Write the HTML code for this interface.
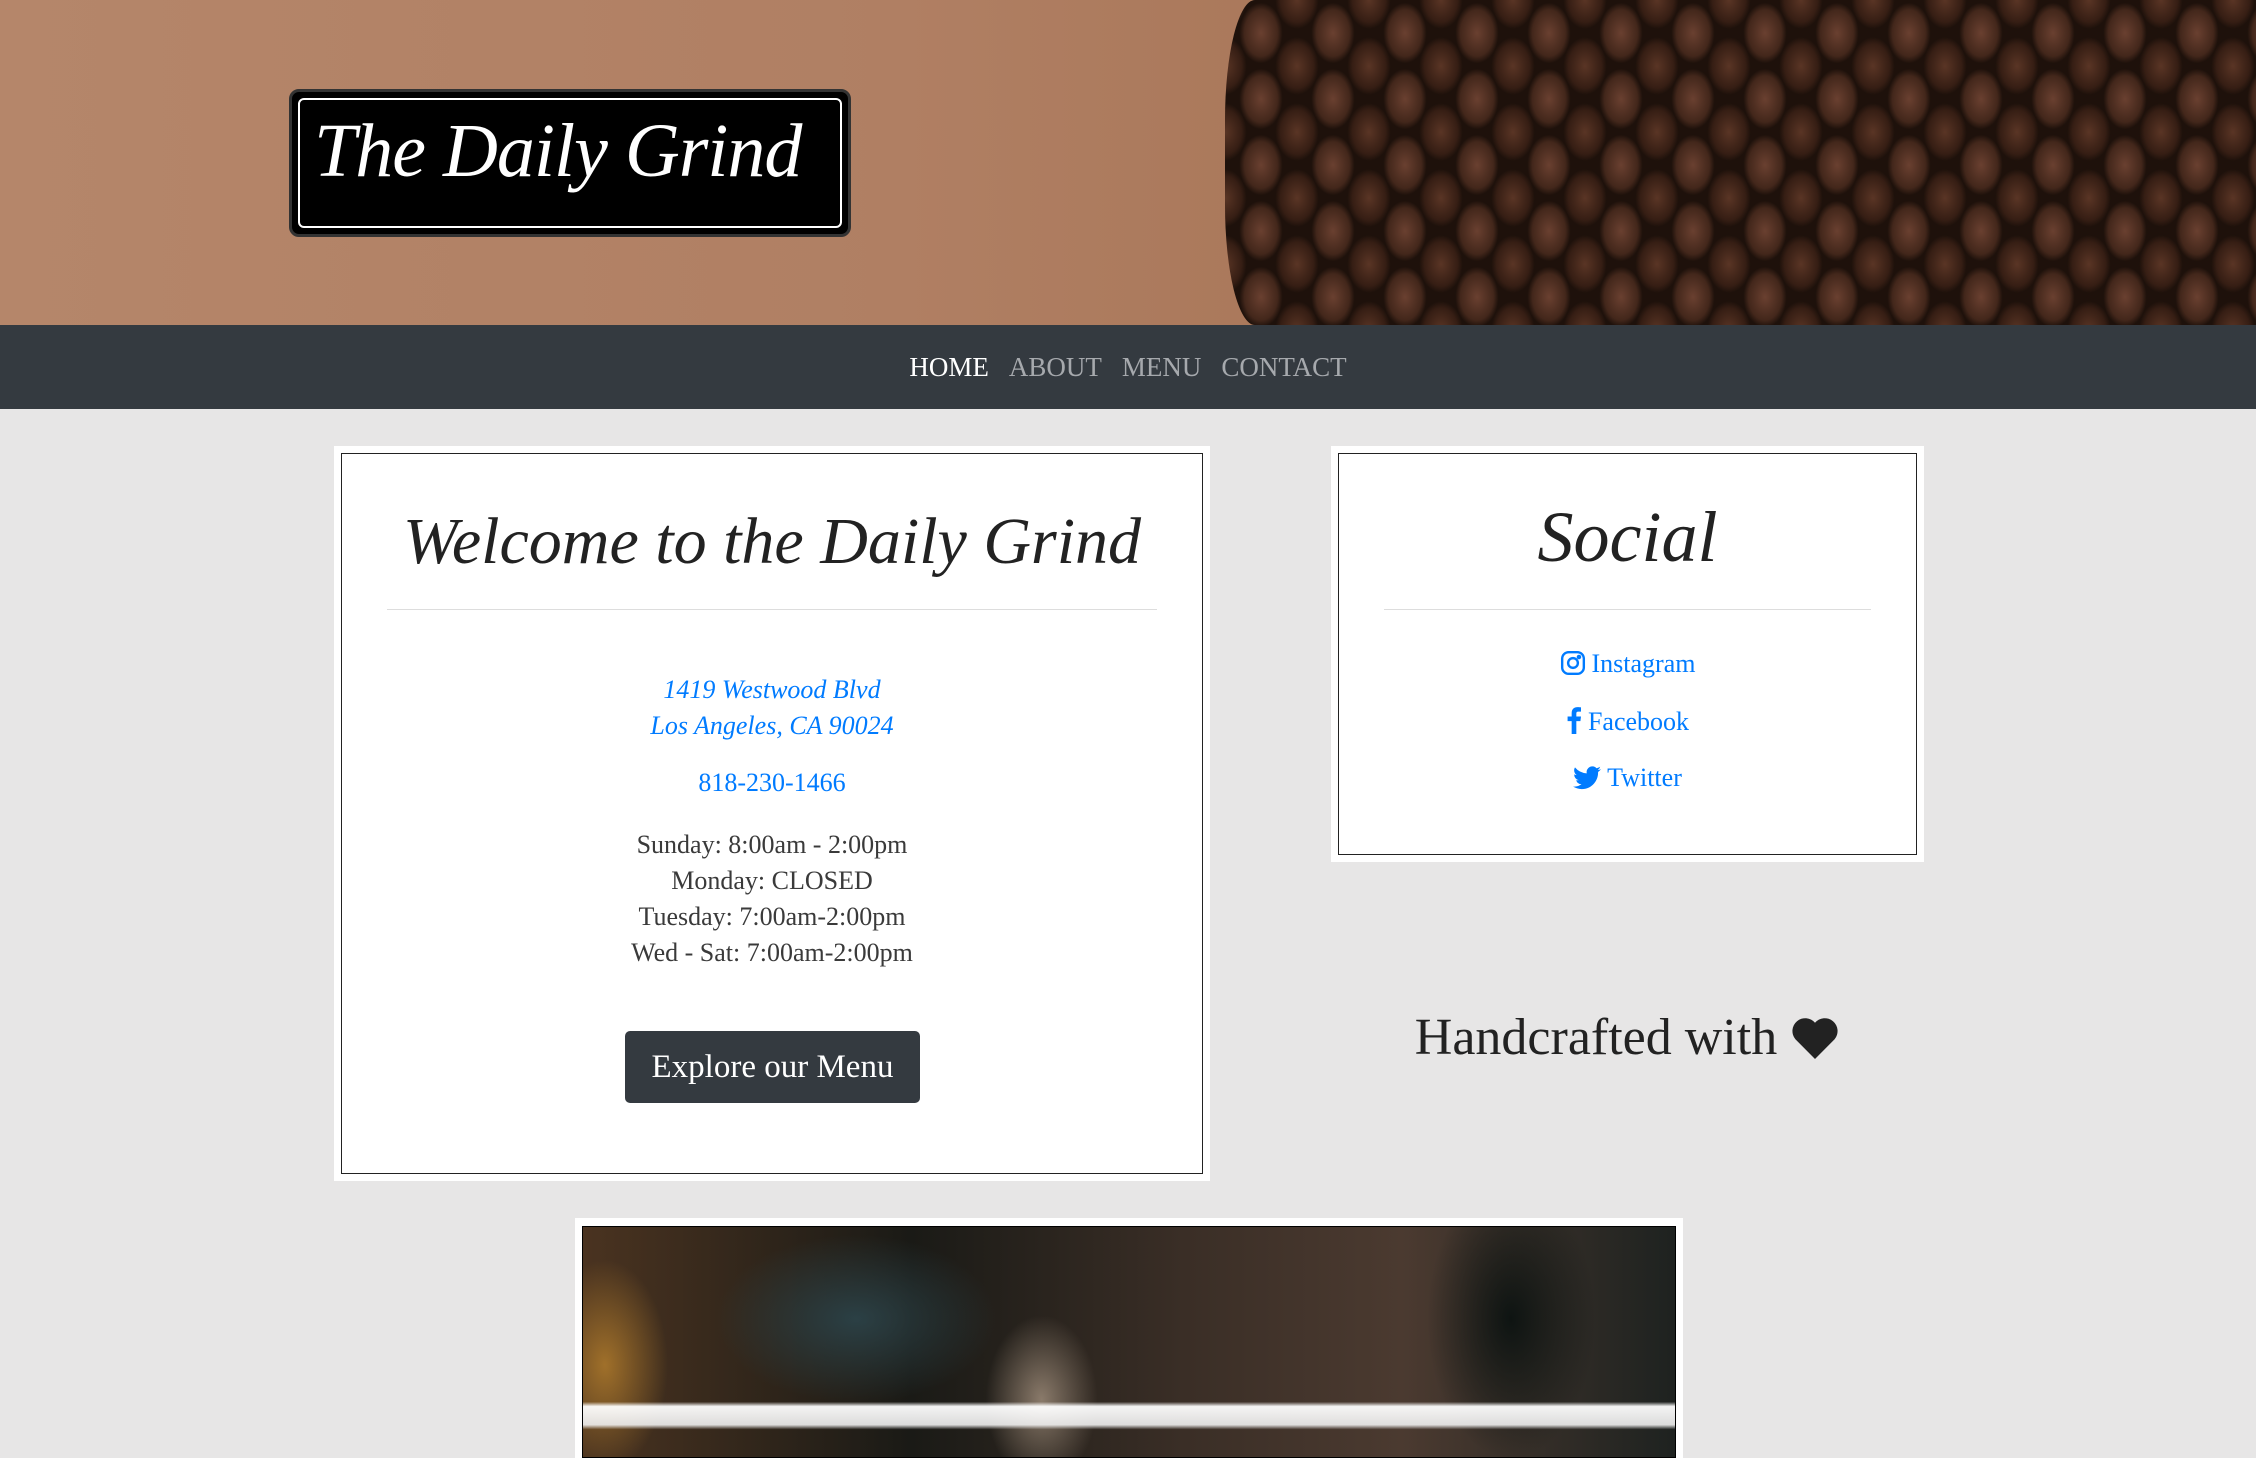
<!DOCTYPE html>
<html><head><meta charset="utf-8"><style>
*{margin:0;padding:0;box-sizing:border-box}
body{width:2256px;height:1447px;overflow:hidden;background:#e7e6e6;font-family:"Liberation Serif",serif;position:relative}
.hero{position:absolute;left:0;top:0;width:2256px;height:325px;background:linear-gradient(90deg,#b5866a 0%,#b07f63 40%,#a97759 60%);overflow:hidden}
.beans{position:absolute;left:1225px;top:0;width:1031px;height:325px;background:
radial-gradient(ellipse 30px 42px at 50% 50%,#6a4030 0%,#43271b 55%,transparent 72%) 0 0/72px 66px,
radial-gradient(ellipse 30px 40px at 50% 50%,#5a3525 0%,#361e14 55%,transparent 72%) 36px 33px/72px 66px,
#1e110b;border-radius:30px 0 0 30px / 120px 0 0 120px}
.logo{position:absolute;left:289px;top:89px;width:562px;height:148px;background:#000;border-radius:10px;border:3px solid #333}
.logo:after{content:"";position:absolute;left:6px;right:6px;top:6px;bottom:6px;border:2px solid #fff;border-radius:6px}
.logo span{position:absolute;left:22px;top:16px;color:#fff;font-family:"Liberation Serif",serif;font-style:italic;font-size:76px;white-space:nowrap;letter-spacing:-1px}
.nav{position:absolute;left:0;top:325px;width:2256px;height:84px;background:#343a40;text-align:center;line-height:84px;font-size:27px}
.nav a{color:#a6a9ad;margin:0 10px;text-decoration:none}
.nav a.on{color:#fff}
.card{position:absolute;background:#fff;padding:7px}
.card .in{border:1px solid #222;width:100%;height:100%;position:relative;text-align:center}
.script{font-style:italic;color:#222;font-weight:normal}
hr{position:absolute;border:0;border-top:1px solid #ddd}
.blue{color:#007bff}
.hours{color:#3a3a3a;font-size:26px;line-height:36px}
.btn{position:absolute;left:283px;top:577px;width:295px;height:72px;background:#343a40;border-radius:5px;color:#fff;font-size:33px;line-height:72px}
.soc{font-size:26px;color:#007bff;position:absolute;width:100%;text-align:center}
.soc svg{vertical-align:-4px;margin-right:6px}
</style></head><body>
<div class="hero"><div class="beans"></div>
<div class="logo"><span>The Daily Grind</span></div></div>
<div class="nav"><a class="on">HOME</a><a>ABOUT</a><a>MENU</a><a>CONTACT</a></div>

<div class="card" style="left:334px;top:446px;width:876px;height:735px"><div class="in">
<div class="script" style="position:absolute;width:100%;top:50px;font-size:66px">Welcome to the Daily Grind</div>
<hr style="left:45px;right:45px;top:155px">
<div class="blue" style="position:absolute;width:100%;top:218px;font-size:26px;line-height:36px;font-style:italic">1419 Westwood Blvd<br>Los Angeles, CA 90024</div>
<div class="blue" style="position:absolute;width:100%;top:314px;font-size:26px">818-230-1466</div>
<div class="hours" style="position:absolute;width:100%;top:373px">Sunday: 8:00am - 2:00pm<br>Monday: CLOSED<br>Tuesday: 7:00am-2:00pm<br>Wed - Sat: 7:00am-2:00pm</div>
<div class="btn">Explore our Menu</div>
</div></div>

<div class="card" style="left:1331px;top:446px;width:593px;height:416px"><div class="in">
<div class="script" style="position:absolute;width:100%;top:42px;font-size:72px">Social</div>
<hr style="left:45px;right:45px;top:155px">
<div class="soc" style="top:195px"><svg width="26" height="26" viewBox="0 0 24 24" fill="none" stroke="#007bff" stroke-width="2.2"><rect x="2" y="2" width="20" height="20" rx="6"/><circle cx="12" cy="12" r="4.5"/><circle cx="17.5" cy="6.5" r="1" fill="#007bff"/></svg>Instagram</div>
<div class="soc" style="top:252px"><svg width="16" height="28" viewBox="0 0 12 24"><path d="M8 24V13h3.5l.5-4H8V6.5C8 5.4 8.4 4.8 9.9 4.8H12V1.2C11.6 1.1 10.4 1 9 1 6 1 4 2.8 4 6.1V9H0.5v4H4v11z" fill="#007bff"/></svg>Facebook</div>
<div class="soc" style="top:309px"><svg width="28" height="24" viewBox="0 0 24 20"><path d="M24 2.4a9.8 9.8 0 0 1-2.8.8A4.9 4.9 0 0 0 23.3.4a9.8 9.8 0 0 1-3.1 1.2A4.9 4.9 0 0 0 11.8 6 14 14 0 0 1 1.7.9a4.9 4.9 0 0 0 1.5 6.6A4.9 4.9 0 0 1 1 6.9a4.9 4.9 0 0 0 3.9 4.9 4.9 4.9 0 0 1-2.2.1 4.9 4.9 0 0 0 4.6 3.4A9.9 9.9 0 0 1 0 17.3 14 14 0 0 0 7.5 19.5c9 0 14-7.5 14-14v-.6A10 10 0 0 0 24 2.4z" fill="#007bff"/></svg>Twitter</div>
</div></div>

<div style="position:absolute;left:1331px;width:593px;top:1008px;text-align:center;font-size:52px;color:#222">Handcrafted with <svg width="50" height="44" viewBox="0 0 24 22" style="vertical-align:-6px"><path d="M12 21.5 2.2 11.6A6 6 0 0 1 12 3.4a6 6 0 0 1 9.8 8.2z" fill="#222"/></svg></div>

<div style="position:absolute;left:575px;top:1218px;width:1108px;height:240px;background:#fff;padding:8px 7px 0 7px">
<div style="width:100%;height:100%;border:1px solid #000;background:
linear-gradient(180deg,transparent 76%,rgba(255,255,255,.95) 78%,rgba(240,240,240,.9) 86%,transparent 88%) 0 0/100% 100% no-repeat,
radial-gradient(ellipse 80px 120px at 42% 75%,#8a7a6a,transparent 70%),
radial-gradient(ellipse 200px 120px at 25% 40%,#2b4045,transparent 70%),
radial-gradient(ellipse 120px 200px at 85% 40%,#0e1412,transparent 70%),
radial-gradient(ellipse 90px 150px at 2% 60%,#a0702a,transparent 70%),
linear-gradient(90deg,#4a3320,#1a1a16 30%,#3a2e26 55%,#4b3a30 75%,#1e2220)"></div></div>
</body></html>
